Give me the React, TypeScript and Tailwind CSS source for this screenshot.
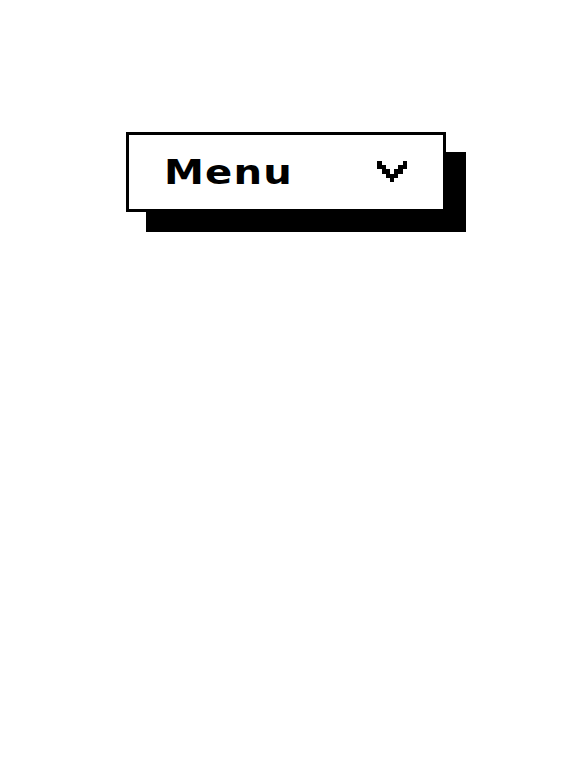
import React from "react";

function PixelChevron() {
  const cells: [number, number][] = [
    [0, 0], [6, 0],
    [0, 1], [1, 1], [5, 1], [6, 1],
    [1, 2], [2, 2], [4, 2], [5, 2],
    [2, 3], [3, 3], [4, 3],
    [3, 4],
  ];
  return (
    <svg width="30" height="21" viewBox="0 0 7 5" shapeRendering="crispEdges" aria-hidden="true" className="-mt-[2px]">
      {cells.map(([x, y]) => (
        <rect key={`${x}-${y}`} x={x} y={y} width="1" height="1" fill="#000" />
      ))}
    </svg>
  );
}

export default function App() {
  return (
    <div className="min-h-screen bg-white">
      <div className="pt-[132px] pl-[126px]">
        <button
          type="button"
          className="flex h-[80px] w-[320px] items-center justify-between border-[3px] border-black bg-white pl-[35px] pr-[36px] shadow-[20px_20px_0_0_#000]"
        >
          <span
            className="inline-block origin-left scale-x-[1.18] text-[34px] font-bold leading-none tracking-[1px] text-black"
            style={{ fontFamily: '"DejaVu Sans", sans-serif' }}
          >
            Menu
          </span>
          <PixelChevron />
        </button>
      </div>
    </div>
  );
}
